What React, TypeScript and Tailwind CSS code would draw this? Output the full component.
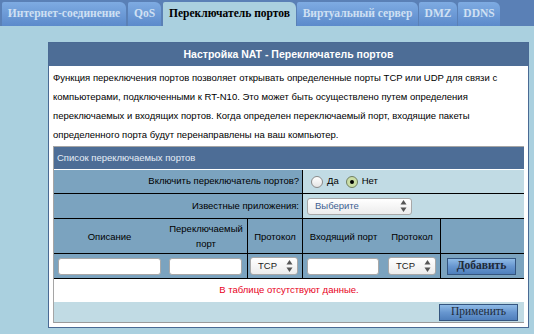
const tabs = [
  { label: 'Интернет-соединение', w: 'w-[124px] ml-[2px]', active: false },
  { label: 'QoS', w: 'w-[33px] ml-[2px]', active: false },
  { label: 'Переключатель портов', w: 'w-[133px] ml-[2px]', active: true },
  { label: 'Виртуальный сервер', w: 'w-[121px] ml-[1px]', active: false },
  { label: 'DMZ', w: 'w-[38px] ml-[1px]', active: false },
  { label: 'DDNS', w: 'w-[42px] ml-[1px]', active: false },
];

const Arrows = () => (
  <svg width="7" height="14" viewBox="0 0 7 14" className="shrink-0">
    <path d="M3.5 1 L6.5 5.5 L0.5 5.5 Z" fill="#555" />
    <path d="M3.5 13 L6.5 8.5 L0.5 8.5 Z" fill="#555" />
  </svg>
);

const Select = ({ text, className }: { text: string; className: string }) => (
  <div
    className={`flex items-center justify-between rounded-[3px] border border-[#a8a8a8] bg-gradient-to-b from-white to-[#ececec] pl-[7px] pr-[4px] text-[9.5px] ${className}`}
  >
    <span>{text}</span>
    <Arrows />
  </div>
);

const Input = ({ className }: { className: string }) => (
  <div className={`h-[17px] rounded-[3px] border border-[#a8a8a8] bg-white ${className}`} />
);

const Button = ({ label, className }: { label: string; className: string }) => (
  <div
    className={`flex h-[17px] items-center justify-center border border-[#34557f] bg-gradient-to-b from-[#8fbbe6] via-[#6796cf] to-[#4f7fbc] font-['Liberation_Serif',serif] text-[11.5px] text-[#1e2a38] ${className}`}
  >
    {label}
  </div>
);

export default function App() {
  return (
    <div className="h-[334px] w-[534px] overflow-hidden bg-[#aad0df] font-['Liberation_Sans',Arial,sans-serif]">
      <div className="flex h-[26px] items-end bg-[#5a80b6]">
        {tabs.map((t) => (
          <div
            key={t.label}
            className={`flex h-[24px] items-center justify-center rounded-tl-[2px] rounded-tr-[6px] font-['Liberation_Serif',serif] text-[11.5px] font-bold ${t.w} ${
              t.active
                ? 'bg-[#aad0df] text-black'
                : 'bg-gradient-to-b from-[#7eabe2] to-[#5c8acb] text-[#cfe0f3]'
            }`}
          >
            {t.label}
          </div>
        ))}
      </div>

      <div className="ml-[48px] mt-[16px] w-[481px] border border-[#4a6a94] bg-white pb-[4px]">
        <div className="flex h-[23px] items-center justify-center bg-[#4d6d96] text-[10.5px] font-bold text-white">
          Настройка NAT - Переключатель портов
        </div>
        <p className="px-[4px] pb-[2px] pt-[2px] text-[9.5px] leading-[19px] text-black">
          Функция переключения портов позволяет открывать определенные порты TCP или UDP для связи с
          компьютерами, подключенными к RT-N10. Это может быть осуществлено путем определения
          переключаемых и входящих портов. Когда определен переключаемый порт, входящие пакеты
          определенного порта будут перенаправлены на ваш компьютер.
        </p>

        <div className="mx-[4px] border-b border-l border-t border-[#a5a5a5] border-b-[#9a9a9a] text-[9.5px]">
          <div className="flex h-[23px] items-center border-b border-white bg-[#4d6d96] pl-[3px] text-[#e6edf6]">
            Список переключаемых портов
          </div>

          <div className="grid h-[24px] grid-cols-[248px_1fr] border-b border-black">
            <div className="flex items-center justify-end bg-[#7ba3bf] pr-[3px]">
              Включить переключатель портов?
            </div>
            <div className="flex items-center border-l border-black bg-[#c1dbe4] pl-[8px]">
              <span className="h-[12px] w-[12px] rounded-full border border-[#8a8a8a] bg-gradient-to-b from-white to-[#e4e4e4]" />
              <span className="ml-[4px]">Да</span>
              <span className="ml-[7px] flex h-[12px] w-[12px] items-center justify-center rounded-full border border-[#6f7f62] bg-[#cadda6]">
                <span className="h-[4px] w-[4px] rounded-full bg-black" />
              </span>
              <span className="ml-[4px]">Нет</span>
            </div>
          </div>

          <div className="grid h-[25px] grid-cols-[248px_1fr] border-b border-black">
            <div className="flex items-center justify-end bg-[#7ba3bf] pr-[3px]">
              Известные приложения:
            </div>
            <div className="flex items-center border-l border-black bg-[#c1dbe4] pl-[4px]">
              <Select text="Выберите" className="h-[17px] w-[105px] text-[#3d5f92]" />
            </div>
          </div>

          <div className="grid h-[35px] grid-cols-[111px_82px_55px_82px_56px_1fr] border-b border-black bg-[#7ba3bf] text-center leading-[15px]">
            <div className="flex items-center justify-center">Описание</div>
            <div className="flex items-center justify-center">
              Переключаемый
              <br />
              порт
            </div>
            <div className="flex items-center justify-center border-l border-black">Протокол</div>
            <div className="flex items-center justify-center border-l border-black">Входящий порт</div>
            <div className="flex items-center justify-center">Протокол</div>
            <div className="border-l border-black" />
          </div>

          <div className="grid h-[25px] grid-cols-[111px_82px_55px_82px_56px_1fr] border-b border-black bg-[#7ba3bf]">
            <div className="flex items-center pl-[4px]">
              <Input className="w-[103px]" />
            </div>
            <div className="flex items-center pl-[4px]">
              <Input className="w-[73px]" />
            </div>
            <div className="flex items-center border-l border-black pl-[2px]">
              <Select text="TCP" className="h-[18px] w-[48px] text-[#222]" />
            </div>
            <div className="flex items-center border-l border-black pl-[4px]">
              <Input className="w-[72px]" />
            </div>
            <div className="flex items-center pl-[4px]">
              <Select text="TCP" className="h-[18px] w-[48px] text-[#222]" />
            </div>
            <div className="flex items-center border-l border-black pl-[6px]">
              <Button label="Добавить" className="w-[69px] font-bold" />
            </div>
          </div>

          <div className="flex h-[23px] items-center justify-center text-[#e8001c]">
            В таблице отсутствуют данные.
          </div>

          <div className="flex h-[20px] items-center justify-end bg-[#c1dbe4] pr-[6px]">
            <Button label="Применить" className="w-[79px]" />
          </div>
        </div>
      </div>
    </div>
  );
}
